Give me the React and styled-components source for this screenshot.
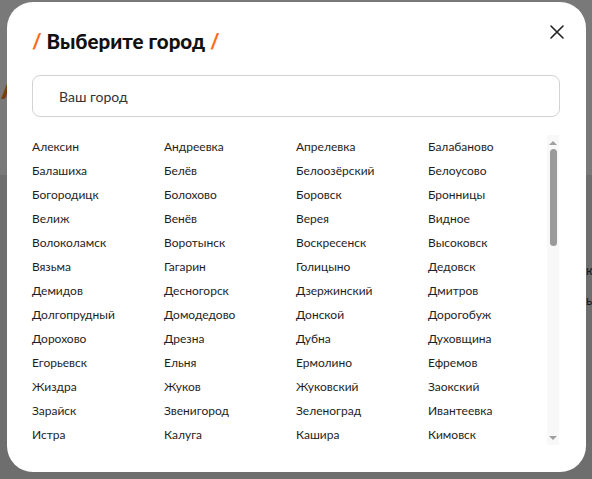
import React from "react";
import styled, { createGlobalStyle } from "styled-components";

const cities = [
  "Алексин", "Андреевка", "Апрелевка", "Балабаново",
  "Балашиха", "Белёв", "Белоозёрский", "Белоусово",
  "Богородицк", "Болохово", "Боровск", "Бронницы",
  "Велиж", "Венёв", "Верея", "Видное",
  "Волоколамск", "Воротынск", "Воскресенск", "Высоковск",
  "Вязьма", "Гагарин", "Голицыно", "Дедовск",
  "Демидов", "Десногорск", "Дзержинский", "Дмитров",
  "Долгопрудный", "Домодедово", "Донской", "Дорогобуж",
  "Дорохово", "Дрезна", "Дубна", "Духовщина",
  "Егорьевск", "Ельня", "Ермолино", "Ефремов",
  "Жиздра", "Жуков", "Жуковский", "Заокский",
  "Зарайск", "Звенигород", "Зеленоград", "Ивантеевка",
  "Истра", "Калуга", "Кашира", "Кимовск",
];

const GlobalStyle = createGlobalStyle`
  html, body {
    margin: 0;
    padding: 0;
  }
  body {
    font-family: Lato, "Noto Sans", sans-serif;
    overflow: hidden;
  }
`;

const Page = styled.div`
  height: 479px;
  display: flex;
  flex-direction: column;
  background: #f2f2f2;
`;

const TopBand = styled.div`
  height: 175px;
  padding-top: 62px;
  box-sizing: border-box;
  color: #f47a1f;
  font-size: 40px;
  font-weight: 700;
  line-height: 1;
`;

const LowerBand = styled.div`
  flex: 1;
  display: flex;
`;

const Promo = styled.div`
  width: 280px;
  background: #f2701f;
  display: flex;
  flex-direction: column;
  padding-top: 166px;
  gap: 40px;
`;

const Rule = styled.div`
  height: 1px;
  background: rgba(255, 255, 255, 0.25);
`;

const Side = styled.div`
  flex: 1;
  background: #dcdcdc;
  padding: 80px 0 0 586px;
  font-size: 13px;
  color: #333;
  line-height: 30px;
  white-space: nowrap;
`;

const Overlay = styled.div`
  position: fixed;
  inset: 0;
  background: rgba(0, 0, 0, 0.5);
`;

const Modal = styled.div`
  position: fixed;
  top: 2px;
  left: 7px;
  width: 579px;
  height: 470px;
  box-sizing: border-box;
  background: #fff;
  border-radius: 26px;
  padding: 26px 26px 0 25px;
  display: flex;
  flex-direction: column;
`;

const Header = styled.div`
  display: flex;
  align-items: center;
  justify-content: space-between;
  height: 30px;
  margin-top: -2px;
`;

const Title = styled.h2`
  margin: 0;
  font-size: 20.5px;
  font-weight: 900;
  color: #111;
`;

const Slash = styled.span`
  color: #ff6b1a;
`;

const Close = styled.button`
  align-self: flex-start;
  border: 0;
  background: none;
  padding: 0;
  width: 16px;
  height: 16px;
  margin-right: -5px;
  margin-top: -2px;
  cursor: pointer;
  display: flex;
`;

const Search = styled.input`
  margin-top: 19px;
  height: 42px;
  width: 528px;
  box-sizing: border-box;
  border: 1px solid #d3d3d3;
  border-radius: 8px;
  padding: 0 0 0 26px;
  font-family: Lato, "Noto Sans", sans-serif;
  font-size: 14px;
  outline: none;

  &::placeholder {
    color: #333;
  }
`;

const ListArea = styled.div`
  margin-top: 18px;
  height: 310px;
  width: 527px;
  display: flex;
`;

const List = styled.ul`
  list-style: none;
  margin: 0;
  padding: 0;
  flex: 1;
  min-width: 0;
  display: grid;
  grid-template-columns: repeat(3, 132px) 1fr;
  grid-auto-rows: 24px;
  align-content: start;
`;

const City = styled.li`
  font-size: 12px;
  color: #1e1e1e;
  line-height: 24px;
  white-space: nowrap;
`;

const Scrollbar = styled.div`
  flex: none;
  width: 12px;
  background: #f8f8f8;
  display: flex;
  flex-direction: column;
  align-items: center;
  padding: 6px 0 5px;
  box-sizing: border-box;
`;

const Arrow = styled.div`
  width: 0;
  height: 0;
  border-left: 4px solid transparent;
  border-right: 4px solid transparent;
  ${({ $down }) =>
    $down
      ? "border-top: 4px solid #a0a0a0; margin-top: auto;"
      : "border-bottom: 4px solid #a0a0a0;"}
`;

const Thumb = styled.div`
  margin-top: 4px;
  width: 7px;
  height: 97px;
  border-radius: 4px;
  background: #9a9a9a;
`;

export default function App() {
  return (
    <>
      <GlobalStyle />
      <Page>
        <TopBand>/</TopBand>
        <LowerBand>
          <Promo>
            <Rule />
            <Rule />
          </Promo>
          <Side>
            <div>ю</div>
            <div>ы</div>
          </Side>
        </LowerBand>
      </Page>
      <Overlay />
      <Modal>
        <Header>
          <Title>
            <Slash>/</Slash> Выберите город <Slash>/</Slash>
          </Title>
          <Close aria-label="Закрыть">
            <svg width="16" height="16" viewBox="0 0 16 16">
              <path
                d="M2 2L14 14M14 2L2 14"
                stroke="#222"
                strokeWidth="1.6"
                strokeLinecap="round"
              />
            </svg>
          </Close>
        </Header>
        <Search placeholder="Ваш город" />
        <ListArea>
          <List>
            {cities.map((city) => (
              <City key={city}>{city}</City>
            ))}
          </List>
          <Scrollbar>
            <Arrow />
            <Thumb />
            <Arrow $down />
          </Scrollbar>
        </ListArea>
      </Modal>
    </>
  );
}
